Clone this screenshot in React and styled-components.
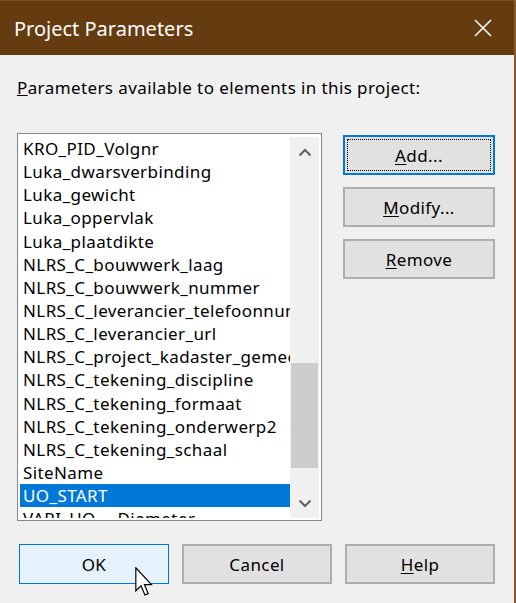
import styled, { createGlobalStyle } from 'styled-components';

const GlobalStyle = createGlobalStyle`
  html, body {
    margin: 0;
    padding: 0;
    background: #f0f0f0;
  }
`;

const params = [
  'KRO_PID_Volgnr',
  'Luka_dwarsverbinding',
  'Luka_gewicht',
  'Luka_oppervlak',
  'Luka_plaatdikte',
  'NLRS_C_bouwwerk_laag',
  'NLRS_C_bouwwerk_nummer',
  'NLRS_C_leverancier_telefoonnummer',
  'NLRS_C_leverancier_url',
  'NLRS_C_project_kadaster_gemeente',
  'NLRS_C_tekening_discipline',
  'NLRS_C_tekening_formaat',
  'NLRS_C_tekening_onderwerp2',
  'NLRS_C_tekening_schaal',
  'SiteName',
  'UO_START',
  'VARI_UO_-_Diameter',
];

const uiFont = "'Noto Sans', 'Open Sans', sans-serif";

const Window = styled.div`
  width: 516px;
  height: 603px;
  box-sizing: border-box;
  display: flex;
  flex-direction: column;
  background: #f0f0f0;
  border-right: 2px solid #8a5a2b;
  font-family: ${uiFont};
  color: #000;
  position: relative;
  overflow: hidden;
`;

const TitleBar = styled.div`
  height: 55px;
  flex: none;
  display: flex;
  align-items: center;
  justify-content: space-between;
  padding: 0 22px 0 14px;
  background: #643c10;
  border-top: 1px solid #7d5227;
  box-sizing: border-box;
  color: #fff;
  font-family: ${uiFont};
  font-size: 20px;
`;

const Body = styled.div`
  flex: 1;
  display: flex;
  flex-direction: column;
  padding: 0 0 0 17px;
`;

const Label = styled.div`
  margin-top: 23px;
  height: 20px;
  font-size: 17px;
  letter-spacing: 0.4px;
  line-height: 20px;
`;

const MainRow = styled.div`
  display: flex;
  margin-top: 35px;
`;

const ListBox = styled.div`
  width: 305px;
  height: 388px;
  box-sizing: border-box;
  border: 1px solid #828790;
  background: #fff;
  padding: 3px 2px 2px 2px;
  display: flex;
`;

const Items = styled.div`
  flex: 1;
  overflow: hidden;
`;

const Item = styled.div`
  height: 23.15px;
  line-height: 23px;
  padding-left: 3px;
  font-size: 17px;
  letter-spacing: 0.4px;
  white-space: nowrap;
  overflow: hidden;
  background: ${({ $selected }) => ($selected ? '#0078d7' : 'transparent')};
  color: ${({ $selected }) => ($selected ? '#fff' : '#000')};
`;

const ScrollBar = styled.div`
  width: 29px;
  flex: none;
  display: flex;
  flex-direction: column;
  background: #f0f0f0;
`;

const ScrollButton = styled.div`
  height: 30px;
  flex: none;
  display: flex;
  align-items: center;
  justify-content: center;
`;

const Track = styled.div`
  flex: 1;
  display: flex;
  flex-direction: column;
  padding-top: ${({ $offset }) => $offset}px;
`;

const Thumb = styled.div`
  height: ${({ $size }) => $size}px;
  margin: 0 1px;
  background: #cdcdcd;
`;

const SideButtons = styled.div`
  display: flex;
  flex-direction: column;
  gap: 12px;
  margin-left: 21px;
  margin-top: 2px;
`;

const Button = styled.button`
  width: ${({ $w }) => $w || 152}px;
  height: 40px;
  box-sizing: border-box;
  position: relative;
  font-family: ${uiFont};
  font-size: 17px;
  letter-spacing: 0.4px;
  color: #000;
  padding: 0;
  background: ${({ $hover }) => ($hover ? '#e5f1fb' : '#e1e1e1')};
  border-style: solid;
  border-color: ${({ $default, $hover }) => ($default || $hover ? '#0078d7' : '#adadad')};
  border-width: ${({ $hover }) => ($hover ? '1.5px' : '2px')};

  u {
    text-decoration-thickness: 1px;
    text-underline-offset: 2px;
  }
`;

const FocusRect = styled.span`
  position: absolute;
  inset: 2px;
  border: 1px dotted #000;
  pointer-events: none;
`;

const BottomRow = styled.div`
  display: flex;
  gap: 13px;
  margin-top: 23px;
  margin-left: 2px;
`;

const Cursor = styled.svg`
  position: absolute;
  left: 135px;
  top: 567px;
`;

const Chevron = ({ up }) => (
  <svg width="14" height="9" viewBox="0 0 14 9">
    <path
      d={up ? 'M1.5 7.5 L7 2 L12.5 7.5' : 'M1.5 1.5 L7 7 L12.5 1.5'}
      fill="none"
      stroke="#606060"
      strokeWidth="2"
    />
  </svg>
);

const App = () => {
  return (
    <Window>
      <GlobalStyle />
      <TitleBar>
        <span>Project Parameters</span>
        <svg width="18" height="18" viewBox="0 0 18 18">
          <path d="M1 1 L17 17 M17 1 L1 17" stroke="#fff" strokeWidth="1.6" />
        </svg>
      </TitleBar>
      <Body>
        <Label>
          <u>P</u>arameters available to elements in this project:
        </Label>
        <MainRow>
          <ListBox>
            <Items>
              {params.map((p) => (
                <Item key={p} $selected={p === 'UO_START'}>
                  {p}
                </Item>
              ))}
            </Items>
            <ScrollBar>
              <ScrollButton>
                <Chevron up />
              </ScrollButton>
              <Track $offset={196}>
                <Thumb $size={105} />
              </Track>
              <ScrollButton>
                <Chevron />
              </ScrollButton>
            </ScrollBar>
          </ListBox>
          <SideButtons>
            <Button $default>
              <FocusRect />
              <u>A</u>dd...
            </Button>
            <Button>
              <u>M</u>odify...
            </Button>
            <Button>
              <u>R</u>emove
            </Button>
          </SideButtons>
        </MainRow>
        <BottomRow>
          <Button $w={150} $hover>
            OK
          </Button>
          <Button $w={150}>Cancel</Button>
          <Button $w={150}>
            <u>H</u>elp
          </Button>
        </BottomRow>
      </Body>
      <Cursor width="18" height="29" viewBox="0 0 12 19.5">
        <path
          d="M0.5 0.5 L0.5 16 L4 12.6 L6.6 18.8 L8.8 17.9 L6.3 11.8 L11 11.8 Z"
          fill="#fff"
          stroke="#000"
          strokeWidth="0.8"
          strokeLinejoin="miter"
        />
      </Cursor>
    </Window>
  );
};

export default App;
